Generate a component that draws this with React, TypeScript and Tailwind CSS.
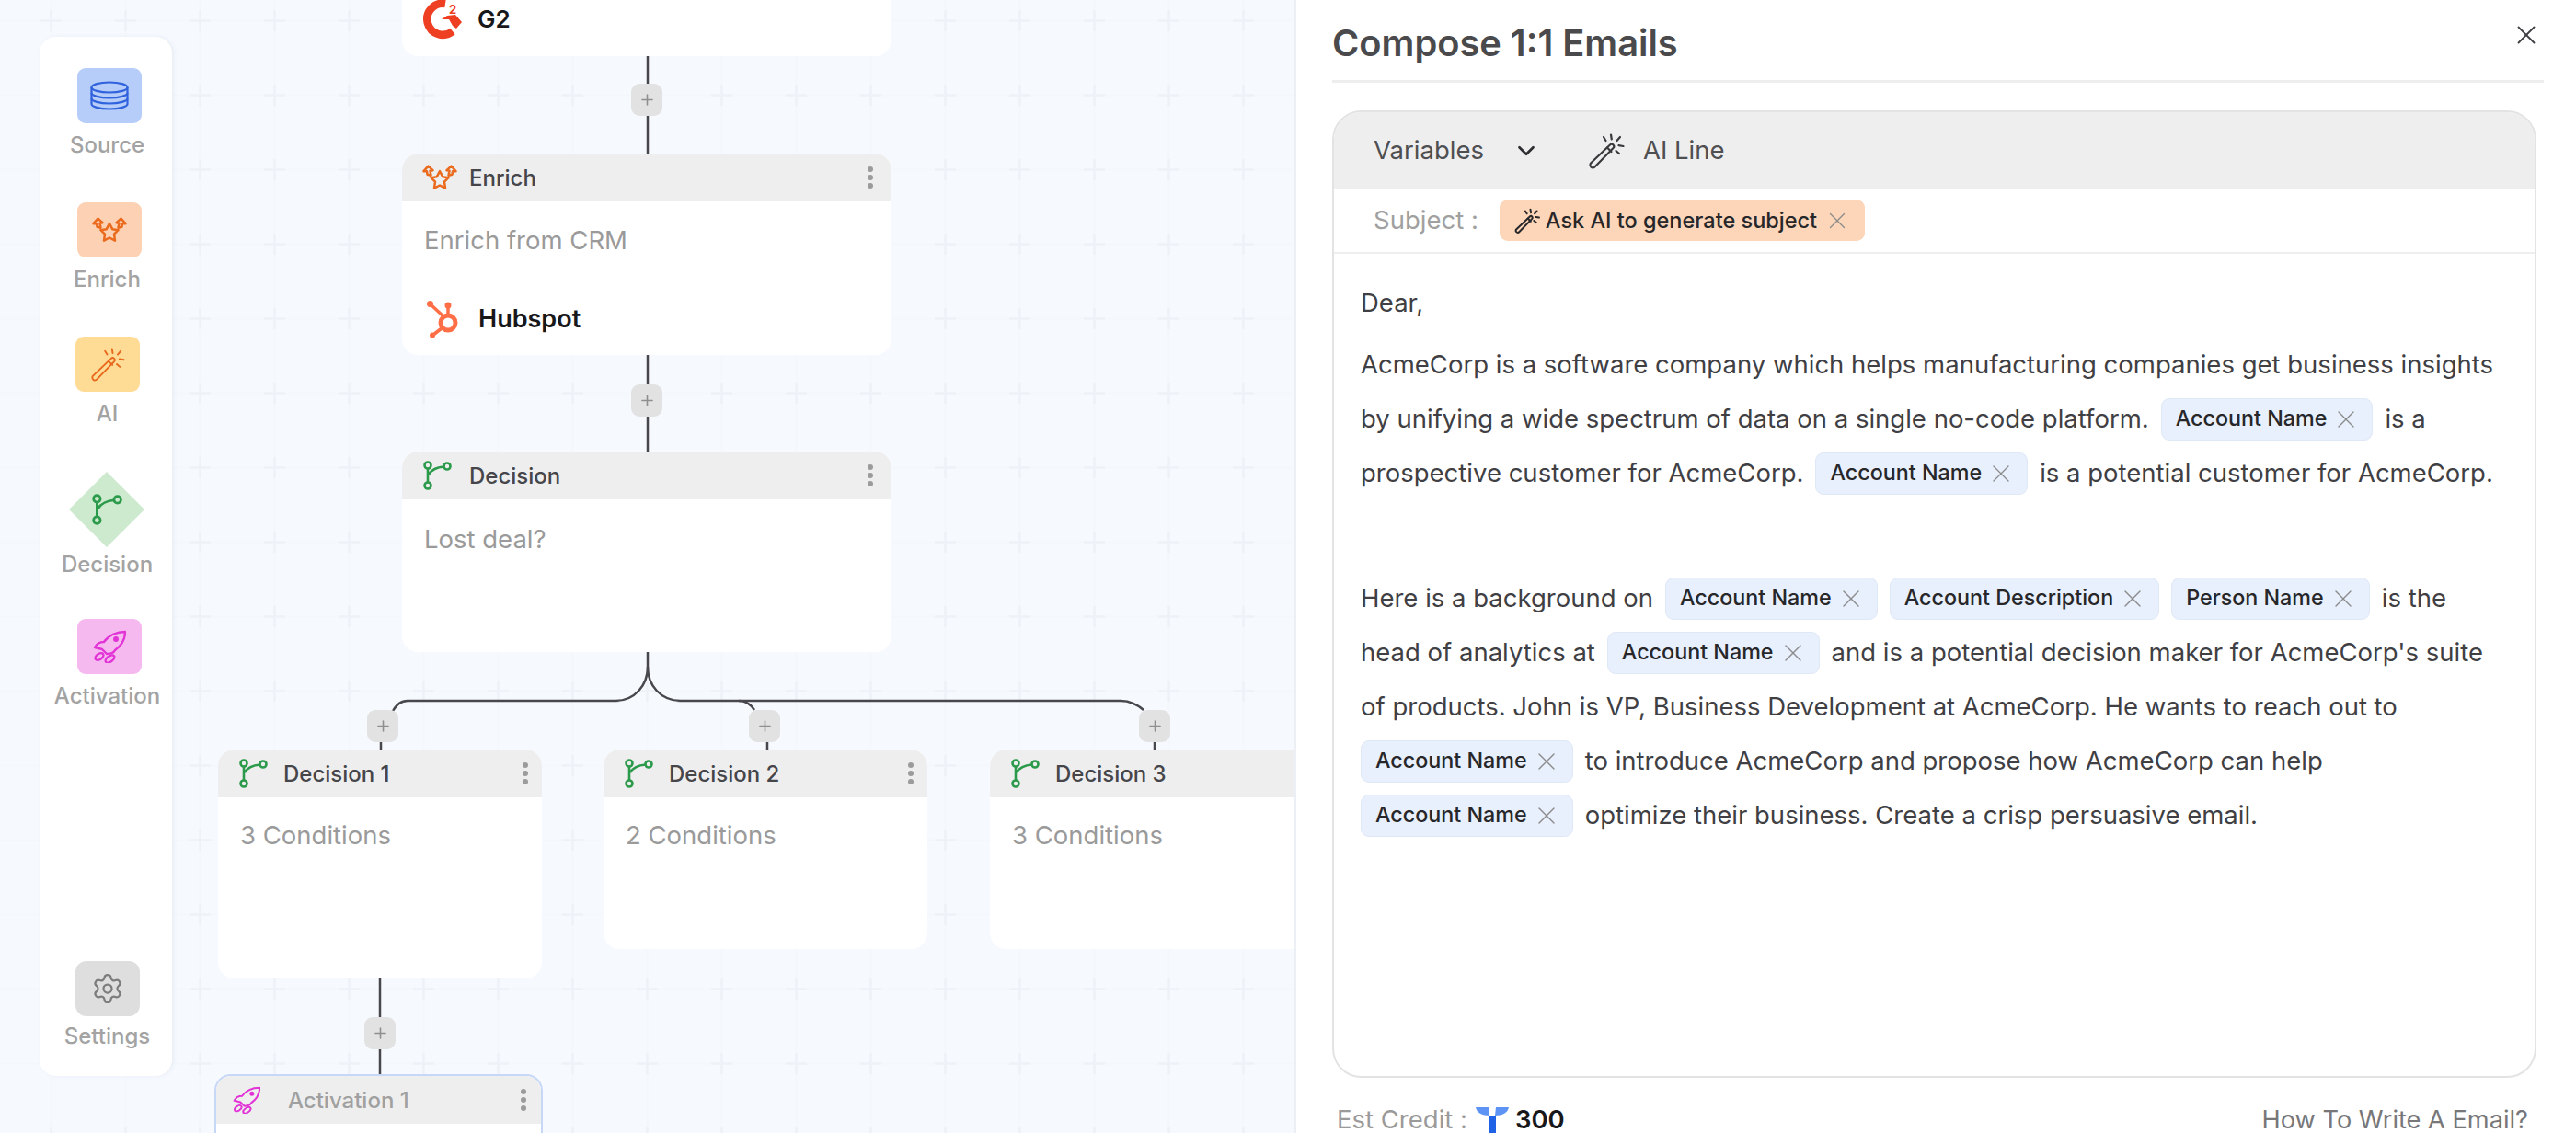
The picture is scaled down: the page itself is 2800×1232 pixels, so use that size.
import type { ReactNode } from 'react'
import { ChevronDown, Plus, Settings, X } from 'lucide-react'

// ── Icons ──────────────────────────────────────────────────────────────────
function DatabaseIcon() {
  return (
    <svg width="42" height="32" viewBox="0 0 42 32" fill="none" stroke="#2f62dc" strokeWidth="2.2">
      <ellipse cx="21" cy="7" rx="19.5" ry="5.5" />
      <path d="M1.5 7v18c0 3 8.7 5.5 19.5 5.500s19.5-2.500 19.500-5.500V7" />
      <path d="M1.500 13c0 3 8.700 5.500 19.500 5.500s19.500-2.500 19.500-5.500M1.500 19c0 3 8.700 5.500 19.500 5.500s19.500-2.500 19.500-5.500" />
    </svg>
  )
}

function EnrichIcon({ size = 38 }: { size?: number }) {
  return (
    <svg width={size} height={size * 0.72} viewBox="0 0 38 27" fill="none" stroke="#ea6a1e" strokeWidth="2.500" strokeLinejoin="round">
      <path d="M19 7l3.200 6 6.300 1-4.500 4.500 1 7-6-3.200-6 3.200 1-7-4.500-4.500 6.300-1z" />
      <path d="M1.500 7L6.500 1.500 11.500 6 8.500 6.500 9.500 11.500 5.500 10.500 5 7z" />
      <path d="M36.500 7L31.500 1.500 26.500 6 29.500 6.500 28.500 11.500 32.500 10.500 33 7z" />
    </svg>
  )
}

function WandIcon({ size = 40, color = '#e8681c', width = 2 }: { size?: number; color?: string; width?: number }) {
  return (
    <svg width={size} height={size} viewBox="0 0 40 40" fill="none" stroke={color} strokeWidth={width} strokeLinecap="round">
      <path d="M3 33.500L24 13.500c1-1 2.500-1 3.500 0s1 2.500 0 3.500L7.500 37.500c-1.200 1.200-3 1.200-4 .2s-1.500-3 -.5-4.200z" />
      <path d="M21 16.500l4.500 4.500" />
      <path d="M25 2.500l.8 5M35 5l-3.500 4M38.500 15l-5-.8M34 23l-3.500-3M17 5l2.500 4" />
    </svg>
  )
}

function BranchIcon({ size = 32 }: { size?: number }) {
  return (
    <svg width={size} height={size} viewBox="0 0 32 32" fill="none" stroke="#2c9a4b" strokeWidth="2.600">
      <circle cx="6" cy="5" r="3.500" />
      <circle cx="6" cy="27" r="3.500" />
      <circle cx="27" cy="6" r="3.500" />
      <path d="M6 8.500v15M7 15c3-5 10-8 16.500-8.500" />
    </svg>
  )
}

function RocketIcon({ size = 36 }: { size?: number }) {
  return (
    <svg width={size} height={size} viewBox="0 0 36 36" fill="none" stroke="#e233d6" strokeWidth="2.400" strokeLinejoin="round">
      <path d="M35 2C26 2 17 6 12 13 8 13 4 15 2 19L10 21 15 26C20 26 23 24 24 22 31 17 35 10 35 2z" />
      <circle cx="25" cy="10" r="1.800" fill="#e233d6" />
      <ellipse cx="7" cy="29" rx="5" ry="3" transform="rotate(-35 7 29)" />
      <ellipse cx="18.500" cy="31.500" rx="5.500" ry="3" transform="rotate(-35 18.500 31.500)" />
    </svg>
  )
}

function G2Logo() {
  return (
    <svg width="44" height="46" viewBox="0 0 44 46" fill="none">
      <path d="M25 6A17 17 0 1 0 33 36" stroke="#ef3f23" strokeWidth="8.500" />
      <path d="M21 23L27 19 36 18 43 26 37 33 33 30 29 23z" fill="#ef3f23" />
      <text x="29" y="17" fontSize="13" fontWeight="700" fill="#ef3f23" fontFamily="Inter, sans-serif">2</text>
    </svg>
  )
}

function HubspotLogo() {
  return (
    <svg width="38" height="42" viewBox="0 0 38 42" fill="none" stroke="#ff6f47">
      <circle cx="24" cy="25" r="8" strokeWidth="5" />
      <path d="M5 5l14 13M24 17V8M17 31l-9 7" strokeWidth="3.500" />
      <circle cx="4.500" cy="4.500" r="3.500" fill="#ff6f47" stroke="none" />
      <circle cx="24" cy="6" r="3.500" fill="#ff6f47" stroke="none" />
      <circle cx="7" cy="38.500" r="3" fill="#ff6f47" stroke="none" />
    </svg>
  )
}

function CreditLogo() {
  return (
    <svg width="36" height="28" viewBox="0 0 36 28" className="shrink-0">
      <path d="M0 0h14l1 9C7 9 1 6 0 0z" fill="#5d93f5" />
      <path d="M36 0H22l-1 9c8 0 14-3 15-9z" fill="#5d93f5" />
      <path d="M14 10h8v18h-8z" fill="#1f62e6" />
    </svg>
  )
}

// ── Canvas pieces ──────────────────────────────────────────────────────────
function Kebab() {
  return (
    <div className="flex flex-col gap-[2.500px] ml-auto">
      <span className="w-[6.500px] h-[6.500px] rounded-full bg-[#9b9b9b]" />
      <span className="w-[6.500px] h-[6.500px] rounded-full bg-[#9b9b9b]" />
      <span className="w-[6.500px] h-[6.500px] rounded-full bg-[#9b9b9b]" />
    </div>
  )
}

type NodeProps = {
  className: string
  icon: ReactNode
  title: string
  iconClass?: string
  headerClass?: string
  children?: ReactNode
}

function NodeCard({ className, icon, title, iconClass = 'w-[49px]', headerClass = 'pr-[15px]', children }: NodeProps) {
  return (
    <div className={`absolute bg-white rounded-[18px] overflow-hidden ${className}`}>
      <div className={`flex items-center h-[52px] bg-[#eeeeee] pl-[22px] ${headerClass}`}>
        <div className={`flex items-center shrink-0 ${iconClass}`}>{icon}</div>
        <span className="text-[24px] font-medium text-[#45454a] pt-[2px]">{title}</span>
        <Kebab />
      </div>
      {children}
    </div>
  )
}

function PlusButton({ className }: { className: string }) {
  return (
    <div className={`absolute w-[34px] h-[35px] rounded-[9px] bg-[#e2e2e2] flex items-center justify-center ${className}`}>
      <Plus size={19} strokeWidth={2} color="#8f8f8f" />
    </div>
  )
}

function PaletteItem({ icon, label, boxClass, rowClass }: { icon: ReactNode; label: string; boxClass: string; rowClass: string }) {
  return (
    <div className={`flex flex-col items-center ${rowClass}`}>
      <div className={`w-[70px] h-[60px] rounded-[9px] flex items-center justify-center ${boxClass}`}>{icon}</div>
      <span className="text-[24px] leading-[30px] mt-[9px] text-[#a3a3a3] font-medium">{label}</span>
    </div>
  )
}

function Sidebar() {
  return (
    <div className="absolute left-[43px] top-[40px] w-[144px] h-[1130px] rounded-[18px] bg-white shadow-[2px_0_4px_rgba(120,140,170,0.10)] flex flex-col items-center pt-[34px] pl-[3px]">
      <PaletteItem icon={<DatabaseIcon />} label="Source" boxClass="bg-[#b7cdf9] ml-[5px]" rowClass="" />
      <PaletteItem icon={<EnrichIcon />} label="Enrich" boxClass="bg-[#fdd2b4] ml-[5px]" rowClass="mt-[47px]" />
      <PaletteItem icon={<WandIcon size={38} />} label="AI" boxClass="bg-[#fedc95] ml-[1px]" rowClass="mt-[47px]" />
      <div className="flex flex-col items-center mt-[48px]">
        <div className="relative w-[82px] h-[82px] flex items-center justify-center">
          <svg width="82" height="82" viewBox="0 0 82 82" className="absolute inset-0">
            <path d="M41 0l41 41-41 41L0 41z" fill="#cdeacf" />
          </svg>
          <div className="relative"><BranchIcon size={34} /></div>
        </div>
        <span className="text-[24px] leading-[30px] mt-[4px] text-[#a3a3a3] font-medium">Decision</span>
      </div>
      <PaletteItem icon={<RocketIcon size={36} />} label="Activation" boxClass="bg-[#f5b9f0] ml-[5px]" rowClass="mt-[44px]" />
      <div className="mt-auto mb-[28px] flex flex-col items-center">
        <div className="w-[70px] h-[60px] rounded-[12px] bg-[#dedede] flex items-center justify-center ml-[1px]">
          <Settings size={36} strokeWidth={1.500} color="#7c7c7c" />
        </div>
        <span className="text-[24px] leading-[30px] mt-[7px] text-[#a3a3a3] font-medium">Settings</span>
      </div>
    </div>
  )
}

function Canvas() {
  return (
    <div className="relative w-[1407px] h-[1232px] shrink-0 overflow-hidden bg-[#f6f9fe]">
      <svg width="1407" height="1232" className="absolute inset-0">
        <defs>
          <pattern id="grid" x="15" y="-18" width="81" height="81" patternUnits="userSpaceOnUse">
            <path d="M40.500 0v81M0 40.500h81" stroke="#f4f7fc" strokeWidth="1.500" />
            <path d="M40.500 29v23M29 40.500h23" stroke="#eef1f7" strokeWidth="2.500" />
          </pattern>
        </defs>
        <rect width="1407" height="1232" fill="url(#grid)" />
        <g fill="none" stroke="#48484c" strokeWidth="2.500">
          <path d="M704 61V167M704 386V491M413 1064V1168" />
          <path d="M704 709V725C704 745 690 762 669 762H443C436 762 431 766 427 773" />
          <path d="M704 725C704 745 718 762 740 762H1218C1228 762 1236 766 1243 772" />
          <path d="M803 762C810 762 816 766 820 772" />
          <path d="M414 806V815M834 806V815M1255 806V815" />
        </g>
      </svg>

      <Sidebar />

      <div className="absolute left-[437px] top-[-40px] w-[532px] h-[101px] bg-white rounded-[18px] flex items-end pl-[22px] pb-[17px] gap-[16px]">
        <G2Logo />
        <span className="text-[26px] leading-[32px] font-semibold text-[#18181b] mb-[7px]">G2</span>
      </div>
      <PlusButton className="left-[686px] top-[91px]" />

      <NodeCard className="left-[437px] top-[167px] w-[532px] h-[219px]" icon={<EnrichIcon />} title="Enrich" iconClass="w-[51px]" headerClass="pr-[20px]">
        <div className="px-[24px] pt-[24px] text-[27.500px] leading-[36px] text-[#9a9a9a]">Enrich from CRM</div>
        <div className="flex items-center pl-[26px] mt-[47px] gap-[19px]">
          <HubspotLogo />
          <span className="text-[27px] font-semibold text-[#18181b]">Hubspot</span>
        </div>
      </NodeCard>
      <PlusButton className="left-[686px] top-[418px]" />

      <NodeCard className="left-[437px] top-[491px] w-[532px] h-[218px]" icon={<BranchIcon />} title="Decision" iconClass="w-[51px]" headerClass="pr-[20px]">
        <div className="px-[24px] pt-[25px] text-[27.500px] leading-[36px] text-[#9a9a9a]">Lost deal?</div>
      </NodeCard>

      <PlusButton className="left-[399px] top-[772px]" />
      <PlusButton className="left-[814px] top-[772px]" />
      <PlusButton className="left-[1238px] top-[772px]" />

      <NodeCard className="left-[237px] top-[815px] w-[352px] h-[249px]" icon={<BranchIcon />} title="Decision 1">
        <div className="px-[24px] pt-[23px] text-[27.500px] leading-[36px] text-[#9a9a9a]">3 Conditions</div>
      </NodeCard>
      <NodeCard className="left-[656px] top-[815px] w-[352px] h-[217px]" icon={<BranchIcon />} title="Decision 2">
        <div className="px-[24px] pt-[23px] text-[27.500px] leading-[36px] text-[#9a9a9a]">2 Conditions</div>
      </NodeCard>
      <NodeCard className="left-[1076px] top-[815px] w-[352px] h-[217px]" icon={<BranchIcon />} title="Decision 3">
        <div className="px-[24px] pt-[23px] text-[27.500px] leading-[36px] text-[#9a9a9a]">3 Conditions</div>
      </NodeCard>

      <PlusButton className="left-[396px] top-[1106px]" />

      <div className="absolute left-[233px] top-[1168px] w-[357px] h-[120px] bg-white rounded-[18px] border-2 border-[#c6d7f8] overflow-hidden">
        <div className="flex items-center h-[52px] bg-[#eeeeee] pl-[18px] pr-[16px]">
          <div className="w-[60px] shrink-0 flex items-center"><RocketIcon size={30} /></div>
          <span className="text-[24px] font-medium text-[#a0a0a0] pt-[2px]">Activation 1</span>
          <Kebab />
        </div>
      </div>
    </div>
  )
}

// ── Compose panel ──────────────────────────────────────────────────────────
function Tag({ label }: { label: string }) {
  return (
    <span className="inline-flex items-center h-[46px] pl-[15px] pr-[12px] gap-[5px] rounded-[9px] bg-[#e8f0fd] border border-[#dfe8f6] text-[23.300px] font-medium text-[#27272a] shrink-0">
      {label}
      <X size={32} strokeWidth={1} color="#8b8b8b" />
    </span>
  )
}

function Line({ children }: { children: ReactNode }) {
  return <div className="flex items-center gap-[13px] h-[59px] whitespace-nowrap text-[27.500px] text-[#3f3f44]">{children}</div>
}

function ComposePanel() {
  return (
    <div className="flex-1 h-[1232px] overflow-hidden bg-white border-l-2 border-[#eceff3] pl-[39px] pr-[35px]">
      <div className="flex items-center justify-between h-[90px] pt-[7px] border-b-[3px] border-[#eeeeee]">
        <h1 className="text-[39.800px] font-semibold text-[#4a4a4d]">Compose 1:1 Emails</h1>
        <X size={34} strokeWidth={1.300} color="#3f3f44" className="mr-[2px] mb-[18px]" />
      </div>

      <div className="mt-[30px] mr-[8px] h-[1052px] rounded-[32px] border-2 border-[#e3e3e3] overflow-hidden">
        <div className="flex items-center h-[83px] bg-[#eeeeee] pl-[43px] text-[27.500px] text-[#4f4f52]">
          <span>Variables</span>
          <ChevronDown size={30} strokeWidth={2.200} color="#2f2f33" className="ml-[31px]" />
          <div className="ml-[52px] mr-[20px]"><WandIcon size={40} color="#3a3a3e" width={2.200} /></div>
          <span>AI Line</span>
        </div>
        <div className="flex items-center h-[71px] border-b-2 border-[#eeeeee] pl-[43px]">
          <span className="text-[27.500px] text-[#a0a0a0] mr-[23px]">Subject :</span>
          <span className="inline-flex items-center h-[45px] pl-[16px] pr-[15px] rounded-[9px] bg-[#fdd5b8] text-[23.500px] font-medium text-[#27272a]">
            <WandIcon size={28} color="#27272a" width={2.800} />
            <span className="ml-[6px] mr-[7px]">Ask AI to generate subject</span>
            <X size={30} strokeWidth={1.100} color="#8b8b8b" />
          </span>
        </div>

        <div className="pl-[29px] pt-[24px]">
          <Line>Dear,</Line>
          <div className="mt-[8px]">
            <Line>AcmeCorp is a software company which helps manufacturing companies get business insights</Line>
            <Line>by unifying a wide spectrum of data on a single no-code platform.<Tag label="Account Name" />is a</Line>
            <Line>prospective customer for AcmeCorp.<Tag label="Account Name" />is a potential customer for AcmeCorp.</Line>
          </div>
          <div className="mt-[77px]">
            <Line>Here is a background on<Tag label="Account Name" /><Tag label="Account Description" /><Tag label="Person Name" />is the</Line>
            <Line>head of analytics at<Tag label="Account Name" />and is a potential decision maker for AcmeCorp's suite</Line>
            <Line>of products. John is VP, Business Development at AcmeCorp. He wants to reach out to</Line>
            <Line><Tag label="Account Name" />to introduce AcmeCorp and propose how AcmeCorp can help</Line>
            <Line><Tag label="Account Name" />optimize their business. Create a crisp persuasive email.</Line>
          </div>
        </div>
      </div>

      <div className="flex items-center justify-between mt-[32px] pl-[5px] pr-[17px] leading-none">
        <div className="flex items-center">
          <span className="text-[27.500px] text-[#9a9a9a]">Est Credit :</span>
          <div className="ml-[9px] mr-[7px]"><CreditLogo /></div>
          <span className="text-[27.500px] font-semibold text-[#18181b]">300</span>
        </div>
        <span className="text-[27.200px] text-[#77777a]">How To Write A Email?</span>
      </div>
    </div>
  )
}

export default function App() {
  return (
    <div className="flex w-[2800px] h-[1232px] overflow-hidden font-['Inter',sans-serif]">
      <Canvas />
      <ComposePanel />
    </div>
  )
}
